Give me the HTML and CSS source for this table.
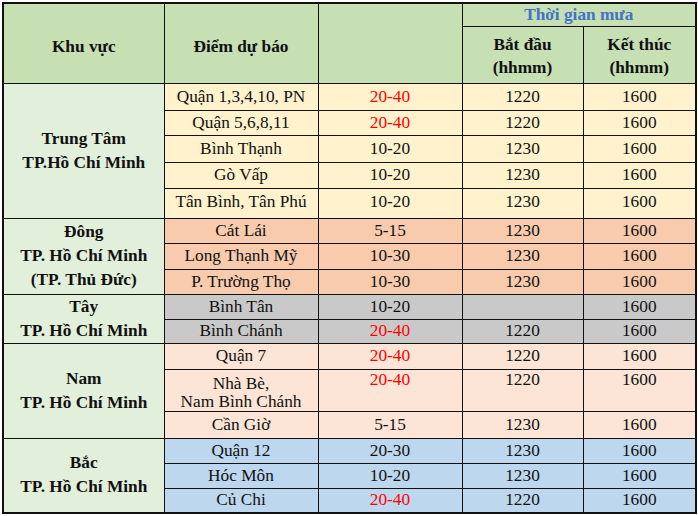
FILE: index.html
```html
<!DOCTYPE html>
<html lang="vi">
<head>
<meta charset="utf-8">
<title>Dự báo mưa TP. Hồ Chí Minh</title>
<link rel="stylesheet" href="styles.css">
</head>
<body>
<div class="wrap">
<table class="rain">
  <colgroup>
    <col class="c1"><col class="c2"><col class="c3"><col class="c4"><col class="c5">
  </colgroup>
  <thead>
    <tr class="h1">
      <th rowspan="2" class="hd hd-main">Khu vực</th>
      <th rowspan="2" class="hd hd-main">Điểm dự báo</th>
      <th rowspan="2" class="hd"></th>
      <th colspan="2" class="hd hd-time">Thời gian mưa</th>
    </tr>
    <tr class="h2">
      <th class="hd hd-sub">Bắt đầu<br>(hhmm)</th>
      <th class="hd hd-sub">Kết thúc<br>(hhmm)</th>
    </tr>
  </thead>
  <tbody>
    <tr class="r27 yel">
      <th rowspan="5" class="reg">Trung Tâm<br>TP.Hồ Chí Minh</th>
      <td>Quận 1,3,4,10, PN</td><td class="red">20-40</td><td>1220</td><td>1600</td>
    </tr>
    <tr class="r25 yel"><td>Quận 5,6,8,11</td><td class="red">20-40</td><td>1220</td><td>1600</td></tr>
    <tr class="r27 yel"><td>Bình Thạnh</td><td>10-20</td><td>1230</td><td>1600</td></tr>
    <tr class="r26 yel"><td>Gò Vấp</td><td>10-20</td><td>1230</td><td>1600</td></tr>
    <tr class="r30 yel top"><td>Tân Bình, Tân Phú</td><td>10-20</td><td>1230</td><td>1600</td></tr>

    <tr class="r25 org grp">
      <th rowspan="3" class="reg">Đông<br>TP. Hồ Chí Minh<br>(TP. Thủ Đức)</th>
      <td>Cát Lái</td><td>5-15</td><td>1230</td><td>1600</td>
    </tr>
    <tr class="r26 org"><td>Long Thạnh Mỹ</td><td>10-30</td><td>1230</td><td>1600</td></tr>
    <tr class="r25 org"><td>P. Trường Thọ</td><td>10-30</td><td>1230</td><td>1600</td></tr>

    <tr class="r25 gry grp">
      <th rowspan="2" class="reg">Tây<br>TP. Hồ Chí Minh</th>
      <td>Bình Tân</td><td>10-20</td><td></td><td>1600</td>
    </tr>
    <tr class="r23 gry"><td>Bình Chánh</td><td class="red">20-40</td><td>1220</td><td>1600</td></tr>

    <tr class="r26 pch grp">
      <th rowspan="3" class="reg">Nam<br>TP. Hồ Chí Minh</th>
      <td>Quận 7</td><td class="red">20-40</td><td>1220</td><td>1600</td>
    </tr>
    <tr class="r42 pch tall"><td class="two">Nhà Bè,<br>Nam Bình Chánh</td><td class="red">20-40</td><td>1220</td><td>1600</td></tr>
    <tr class="r27 pch"><td>Cần Giờ</td><td>5-15</td><td>1230</td><td>1600</td></tr>

    <tr class="r25 blu grp">
      <th rowspan="3" class="reg">Bắc<br>TP. Hồ Chí Minh</th>
      <td>Quận 12</td><td>20-30</td><td>1230</td><td>1600</td>
    </tr>
    <tr class="r25 blu"><td>Hóc Môn</td><td>10-20</td><td>1230</td><td>1600</td></tr>
    <tr class="r25 blu"><td>Củ Chi</td><td class="red">20-40</td><td>1220</td><td>1600</td></tr>
  </tbody>
</table>
</div>
</body>
</html>
```
FILE: styles.css
```css
html, body {
  margin: 0;
  padding: 0;
  background: #ffffff;
}

.wrap {
  padding: 2px 0 0 2px;
}

.rain {
  border-collapse: collapse;
  table-layout: fixed;
  width: 694px;
  font-family: "Liberation Serif", "Times New Roman", serif;
  font-size: 17.3px;
  color: #111111;
  border: 2px solid #111111;
}

.c1 { width: 161px; }
.c2 { width: 154px; }
.c3 { width: 144px; }
.c4 { width: 121px; }
.c5 { width: 113px; }

.rain th,
.rain td {
  border: 1px solid #111111;
  padding: 0;
  text-align: center;
  vertical-align: middle;
  line-height: 20px;
  white-space: nowrap;
  overflow: hidden;
}

.hd {
  background: #c6e0b4;
  font-weight: bold;
}

.h1 { height: 23px; }
.h2 { height: 57px; }

.hd-main {
  padding-top: 8px !important;
}

.hd-time {
  color: #4472c4;
  line-height: 18px !important;
}

.hd-sub {
  line-height: 23px !important;
  padding-top: 3px !important;
}

.reg {
  background: #e2efda;
  font-weight: bold;
  line-height: 24px !important;
}

.r23 { height: 23px; }
.r25 { height: 25px; }
.r26 { height: 26px; }
.r27 { height: 27px; }
.r30 { height: 30px; }
.r42 { height: 42px; }

.yel td { background: #fff2cc; }
.org td { background: #f8cbad; }
.gry td { background: #c9c9c9; }
.pch td { background: #fce4d6; }
.blu td { background: #bdd7ee; }

.top td {
  vertical-align: top;
  padding-top: 3px;
}

.tall td {
  vertical-align: top;
  padding-top: 0;
}

.tall td.two {
  vertical-align: top;
  line-height: 18px;
  padding-top: 5px;
}

.red {
  color: #ff0000;
}
```
